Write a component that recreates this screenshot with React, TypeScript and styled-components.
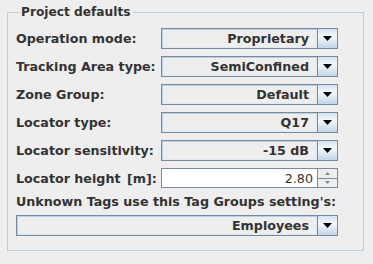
import React from 'react';
import styled, { createGlobalStyle } from 'styled-components';

const GlobalStyle = createGlobalStyle`
  html, body {
    margin: 0;
    padding: 0;
    background-color: #eeeeee;
  }
  body {
    font-family: "DejaVu Sans", "Liberation Sans", sans-serif;
    font-size: 12px;
    color: #333333;
  }
`;

const Page = styled.div`
  width: 373px;
  height: 264px;
  padding: 5px 9px 0 7px;
  box-sizing: border-box;
`;

const Group = styled.fieldset`
  margin: 0;
  padding: 8px 0 14px 8px;
  border: 1px solid #b8cfe5;
  min-width: 0;
`;

const Legend = styled.legend`
  padding: 0 2px;
  margin-left: 3px;
  font-weight: bold;
  font-size: 12.2px;
  line-height: 15px;
  color: #333333;
`;

const Form = styled.div`
  display: grid;
  grid-template-columns: 145px 177px;
  row-gap: 7px;
  align-items: center;
`;

const Label = styled.div<{ $wide?: boolean }>`
  font-weight: bold;
  font-size: 12.7px;
  line-height: 13px;
  white-space: pre;
  grid-column: ${(p) => (p.$wide ? '1 / span 2' : 'auto')};
`;

const Gap = styled.span`
  display: inline-block;
  width: 2px;
`;

const ComboBox = styled.div<{ $wide?: boolean }>`
  display: flex;
  height: 21px;
  grid-column: ${(p) => (p.$wide ? '1 / span 2' : 'auto')};
`;

const ComboValue = styled.div`
  flex: 1;
  display: flex;
  align-items: center;
  justify-content: flex-end;
  padding-right: 8px;
  border: 1px solid #7a8a99;
  box-shadow: inset 1px 1px 0 #b8cfe5, inset -1px -1px 0 #dde8f3;
  background-color: #eeeeee;
  font-weight: bold;
  font-size: 12.7px;
  color: #333333;
`;

const ArrowButton = styled.div`
  width: 19px;
  display: flex;
  align-items: center;
  justify-content: center;
  border: 1px solid #7a8a99;
  border-left: none;
  background: linear-gradient(#d6e3f0, #f4f8fc 40%, #c2d4e7);
`;

const Spinner = styled.div`
  display: flex;
  height: 20px;
`;

const SpinnerField = styled.div`
  flex: 1;
  display: flex;
  align-items: center;
  justify-content: flex-end;
  padding-right: 4px;
  border: 1px solid #7a8a99;
  background-color: #ffffff;
  font-size: 12.7px;
  color: #333333;
`;

const SpinnerButtons = styled.div`
  width: 19px;
  display: flex;
  flex-direction: column;
  border: 1px solid #7a8a99;
  border-left: none;
`;

const SpinnerButton = styled.div<{ $down?: boolean }>`
  flex: 1;
  display: flex;
  align-items: center;
  justify-content: center;
  background: #eeeeee;
  border-top: ${(p) => (p.$down ? '1px solid #7a8a99' : 'none')};
`;

const DownArrow = () => (
  <svg width="9" height="5" viewBox="0 0 9 5">
    <polygon points="0,0 9,0 4.5,5" fill="#000000" />
  </svg>
);

const SmallArrow = ({ up }: { up?: boolean }) => (
  <svg width="5" height="3" viewBox="0 0 5 3">
    <polygon points={up ? '0,3 5,3 2.5,0' : '0,0 5,0 2.5,3'} fill="#7a8a99" />
  </svg>
);

const Combo = ({ value, wide }: { value: string; wide?: boolean }) => (
  <ComboBox $wide={wide}>
    <ComboValue>{value}</ComboValue>
    <ArrowButton>
      <DownArrow />
    </ArrowButton>
  </ComboBox>
);

const rows = [
  { label: 'Operation mode:', value: 'Proprietary' },
  { label: 'Tracking Area type:', value: 'SemiConfined' },
  { label: 'Zone Group:', value: 'Default' },
  { label: 'Locator type:', value: 'Q17' },
  { label: 'Locator sensitivity:', value: '-15 dB' },
];

const App: React.FC = () => (
  <>
    <GlobalStyle />
    <Page>
      <Group>
        <Legend>Project defaults</Legend>
        <Form>
          {rows.map((r) => (
            <React.Fragment key={r.label}>
              <Label>{r.label}</Label>
              <Combo value={r.value} />
            </React.Fragment>
          ))}
          <Label>
            Locator height <Gap />[m]:
          </Label>
          <Spinner>
            <SpinnerField>2.80</SpinnerField>
            <SpinnerButtons>
              <SpinnerButton>
                <SmallArrow up />
              </SpinnerButton>
              <SpinnerButton $down>
                <SmallArrow />
              </SpinnerButton>
            </SpinnerButtons>
          </Spinner>
          <Label $wide>Unknown Tags use this Tag Groups setting's:</Label>
          <Combo value="Employees" wide />
        </Form>
      </Group>
    </Page>
  </>
);

export default App;
